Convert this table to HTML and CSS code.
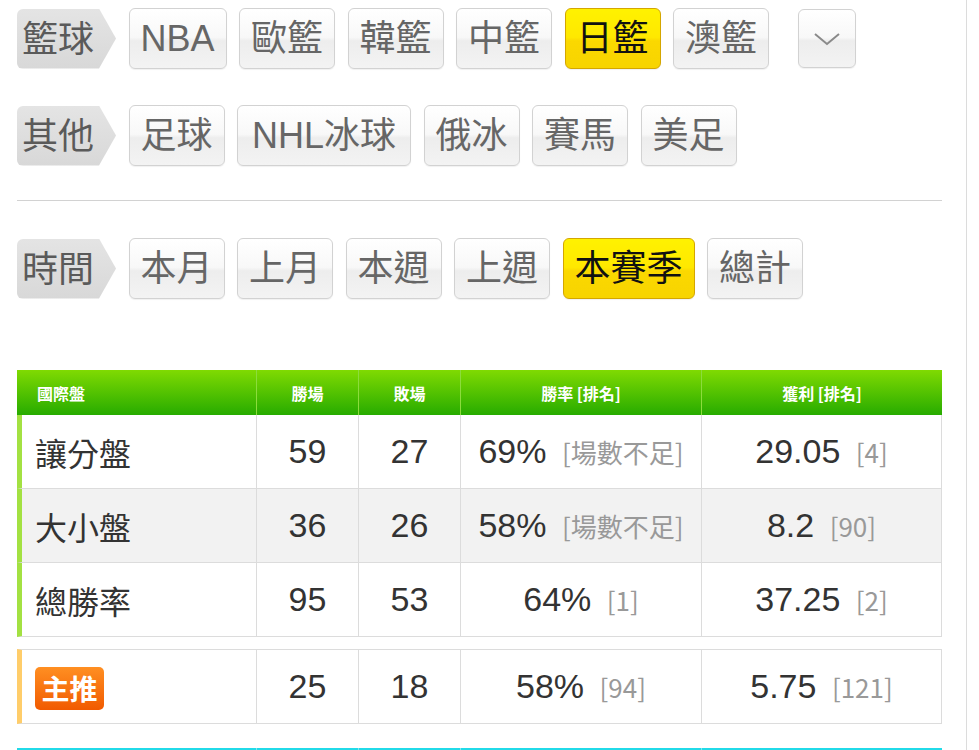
FILE: index.html
```html
<!DOCTYPE html>
<html lang="zh-Hant">
<head>
<meta charset="utf-8">
<title>國際盤</title>
<link rel="stylesheet" href="styles.css">
</head>
<body>
<div class="page">
  <div class="filter-row">
    <span class="tag">籃球</span>
    <a class="btn">NBA</a>
    <a class="btn">歐籃</a>
    <a class="btn">韓籃</a>
    <a class="btn">中籃</a>
    <a class="btn active">日籃</a>
    <a class="btn">澳籃</a>
    <a class="btn more"><svg width="28" height="14" viewBox="0 0 28 14"><path d="M2 2 L14 12 L26 2" fill="none" stroke="#8a8a8a" stroke-width="2"/></svg></a>
  </div>
  <div class="filter-row">
    <span class="tag">其他</span>
    <a class="btn">足球</a>
    <a class="btn wide">NHL冰球</a>
    <a class="btn">俄冰</a>
    <a class="btn">賽馬</a>
    <a class="btn">美足</a>
  </div>
  <div class="divider"></div>
  <div class="filter-row last">
    <span class="tag">時間</span>
    <a class="btn">本月</a>
    <a class="btn">上月</a>
    <a class="btn">本週</a>
    <a class="btn">上週</a>
    <a class="btn active">本賽季</a>
    <a class="btn">總計</a>
  </div>

  <table class="stats">
    <colgroup><col class="c1"><col class="c2"><col class="c3"><col class="c4"><col class="c5"></colgroup>
    <thead>
      <tr><th class="first">國際盤</th><th>勝場</th><th>敗場</th><th>勝率 [排名]</th><th>獲利 [排名]</th></tr>
    </thead>
    <tbody>
      <tr><td class="name">讓分盤</td><td>59</td><td>27</td><td>69% <span class="rank">[場數不足]</span></td><td>29.05 <span class="rank">[4]</span></td></tr>
      <tr class="alt"><td class="name">大小盤</td><td>36</td><td>26</td><td>58% <span class="rank">[場數不足]</span></td><td>8.2 <span class="rank">[90]</span></td></tr>
      <tr><td class="name">總勝率</td><td>95</td><td>53</td><td>64% <span class="rank">[1]</span></td><td>37.25 <span class="rank">[2]</span></td></tr>
    </tbody>
  </table>

  <table class="stats pick">
    <colgroup><col class="c1"><col class="c2"><col class="c3"><col class="c4"><col class="c5"></colgroup>
    <tbody>
      <tr><td class="name"><span class="badge">主推</span></td><td>25</td><td>18</td><td>58% <span class="rank">[94]</span></td><td>5.75 <span class="rank">[121]</span></td></tr>
    </tbody>
  </table>

  <table class="stats cyan">
    <colgroup><col class="c1"><col class="c2"><col class="c3"><col class="c4"><col class="c5"></colgroup>
    <thead>
      <tr><th class="first"></th><th></th><th></th><th></th><th></th></tr>
    </thead>
  </table>
</div>
</body>
</html>
```

FILE: styles.css
```css
html, body {
  margin: 0;
  padding: 0;
  background: #fff;
}
body {
  font-family: "Liberation Sans", "Noto Sans CJK TC", sans-serif;
  color: #333;
}
.page {
  width: 925px;
  padding: 8px 24px 40px 17px;
  border-right: 1px solid #dcdcdc;
  min-height: 760px;
}
.filter-row {
  display: flex;
  align-items: center;
  gap: 12.5px;
  height: 61px;
  margin-bottom: 36px;
}
.filter-row.last {
  margin-bottom: 71px;
}
.tag {
  box-sizing: border-box;
  height: 60px;
  display: flex;
  align-items: center;
  padding: 0 22px 6px 5px;
  font-size: 36px;
  color: #5a5a5a;
  background: linear-gradient(#e4e4e4, #d8d8d8);
  border-radius: 6px 0 0 6px;
  clip-path: polygon(0 0, calc(100% - 17px) 0, 100% 50%, calc(100% - 17px) 100%, 0 100%);
  font-family: "Noto Sans CJK TC", sans-serif;
}
.btn {
  box-sizing: border-box;
  height: 61px;
  line-height: 59px;
  min-width: 96px;
  padding: 0 11px;
  text-align: center;
  font-size: 36px;
  color: #666;
  border: 1px solid #d2d2d2;
  border-radius: 6px;
  background: linear-gradient(#ffffff 0%, #f8f8f8 48%, #ededed 54%, #f3f3f3 100%);
  box-shadow: 0 1px 1px rgba(0,0,0,0.06);
}
.btn.wide {
  padding: 0 14px;
}
.btn.active {
  color: #111;
  border-color: #d4a600;
  background: linear-gradient(#fff200 0%, #ffe800 48%, #fbd800 54%, #f7d400 100%);
}
.btn.more {
  min-width: 58px;
  width: 58px;
  height: 59px;
  padding: 0;
  margin-left: 16px;
  display: flex;
  align-items: center;
  justify-content: center;
}
.divider {
  height: 1px;
  background: #d2d2d2;
  margin: -2px 0 37px;
}
.stats {
  width: 925px;
  table-layout: fixed;
  border-collapse: separate;
  border-spacing: 0;
}
.c1 { width: 239px; }
.c2 { width: 102px; }
.c3 { width: 102px; }
.c4 { width: 241px; }
.c5 { width: 241px; }
.stats th {
  height: 45px;
  padding: 0;
  font-size: 16px;
  font-weight: bold;
  color: #fff;
  text-align: center;
  background: linear-gradient(#80da02, #27ab00);
  border-left: 1px solid #8cdc3c;
  font-family: "Noto Sans CJK TC", sans-serif;
}
.stats th.first {
  text-align: left;
  padding-left: 20px;
  border-left: none;
}
.stats td {
  height: 73px;
  padding: 0;
  text-align: center;
  font-size: 34px;
  color: #333;
  border-bottom: 1px solid #dcdcdc;
  border-left: 1px solid #dcdcdc;
}
.stats td:last-child {
  border-right: 1px solid #dcdcdc;
}
.stats td.name {
  text-align: left;
  padding-left: 13px;
  border-left: 5px solid #a3e142;
  font-family: "Noto Sans CJK TC", sans-serif;
  font-size: 32px;
}
.stats tr.alt td {
  background: #f2f2f2;
}
.rank {
  font-size: 26px;
  color: #999;
  margin-left: 6px;
  font-family: "Noto Sans CJK TC", sans-serif;
}
.pick {
  margin-top: 12px;
}
.pick td {
  border-top: 1px solid #dcdcdc;
}
.pick td.name {
  border-left-color: #ffcd6a;
}
.badge {
  display: inline-block;
  width: 69px;
  height: 43px;
  line-height: 42px;
  text-align: center;
  font-size: 28px;
  font-weight: bold;
  color: #fff;
  border-radius: 5px;
  background: linear-gradient(#ff8f22, #f15a00);
  vertical-align: middle;
  margin-top: -4px;
}
.cyan {
  margin-top: 24px;
}
.cyan th {
  background: linear-gradient(#22dbe9, #14b8d6);
  border-left: 1px solid #7fe8f2;
}
```
